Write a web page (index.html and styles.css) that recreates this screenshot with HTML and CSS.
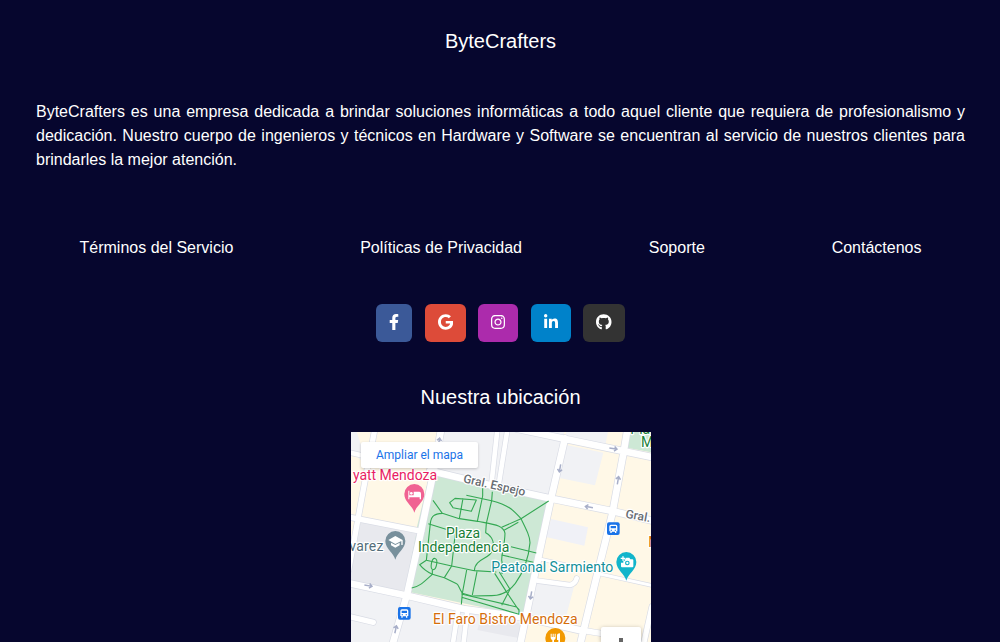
FILE: index.html
```html
<!DOCTYPE html>
<html lang="es">
<head>
<meta charset="utf-8">
<title>ByteCrafters</title>
<link rel="stylesheet" href="styles.css">
</head>
<body>
<footer class="footer">
  <h5 class="title">ByteCrafters</h5>
  <p class="about">ByteCrafters es una empresa dedicada a brindar soluciones informáticas a todo aquel cliente que requiera de profesionalismo y dedicación. Nuestro cuerpo de ingenieros y técnicos en Hardware y Software se encuentran al servicio de nuestros clientes para brindarles la mejor atención.</p>
  <nav class="links">
    <a>Términos del Servicio</a><a>Políticas de Privacidad</a><a>Soporte</a><a>Contáctenos</a>
  </nav>
  <div class="social">
    <a class="btn facebook" aria-label="Facebook"><svg viewBox="0 0 320 512"><path d="M279.14 288l14.22-92.66h-88.91v-60.13c0-25.35 12.42-50.06 52.24-50.06h40.42V6.26S260.43 0 225.36 0c-73.22 0-121.08 44.38-121.08 124.72v70.62H22.89V288h81.39v224h100.17V288z"/></svg></a>
    <a class="btn google" aria-label="Google"><svg viewBox="0 0 488 512"><path d="M488 261.8C488 403.3 391.1 504 248 504 110.8 504 0 393.2 0 256S110.8 8 248 8c66.8 0 123 24.5 166.3 64.9l-67.5 64.9C258.5 52.6 94.3 116.6 94.3 256c0 86.5 69.1 156.6 153.7 156.6 98.2 0 135-70.4 140.8-106.9H248v-85.3h236.1c2.3 12.7 3.9 24.9 3.9 41.4z"/></svg></a>
    <a class="btn instagram" aria-label="Instagram"><svg viewBox="0 0 448 512"><path d="M224.1 141c-63.6 0-114.9 51.3-114.9 114.9s51.3 114.9 114.9 114.9S339 319.5 339 255.9 287.7 141 224.1 141zm0 189.6c-41.1 0-74.7-33.5-74.7-74.7s33.5-74.7 74.7-74.7 74.7 33.5 74.7 74.7-33.6 74.7-74.7 74.7zm146.4-194.3c0 14.9-12 26.8-26.8 26.8-14.9 0-26.8-12-26.8-26.8s12-26.8 26.8-26.8 26.8 12 26.8 26.8zm76.1 27.2c-1.7-35.9-9.9-67.7-36.2-93.9-26.2-26.2-58-34.4-93.9-36.2-37-2.1-147.9-2.1-184.9 0-35.8 1.7-67.6 9.9-93.9 36.1s-34.4 58-36.2 93.9c-2.1 37-2.1 147.9 0 184.9 1.7 35.9 9.9 67.7 36.2 93.9s58 34.4 93.9 36.2c37 2.1 147.9 2.1 184.9 0 35.9-1.7 67.7-9.9 93.9-36.2 26.2-26.2 34.4-58 36.2-93.9 2.1-37 2.1-147.8 0-184.8zM398.8 388c-7.8 19.6-22.9 34.7-42.6 42.6-29.5 11.7-99.5 9-132.1 9s-102.7 2.6-132.1-9c-19.6-7.8-34.7-22.9-42.6-42.6-11.7-29.5-9-99.5-9-132.1s-2.6-102.7 9-132.1c7.8-19.6 22.9-34.7 42.6-42.6 29.5-11.7 99.5-9 132.1-9s102.7-2.6 132.1 9c19.6 7.8 34.7 22.9 42.6 42.6 11.7 29.5 9 99.5 9 132.1s2.7 102.7-9 132.1z"/></svg></a>
    <a class="btn linkedin" aria-label="LinkedIn"><svg viewBox="0 0 448 512"><path d="M100.28 448H7.4V148.9h92.88zM53.79 108.1C24.09 108.1 0 83.5 0 53.8a53.79 53.79 0 0 1 107.58 0c0 29.7-24.1 54.3-53.79 54.3zM447.9 448h-92.68V302.4c0-34.7-.7-79.2-48.29-79.2-48.29 0-55.69 37.7-55.69 76.7V448h-92.78V148.9h89.08v40.8h1.3c12.4-23.5 42.69-48.3 87.88-48.3 94 0 111.28 61.9 111.28 142.3V448z"/></svg></a>
    <a class="btn github" aria-label="GitHub"><svg viewBox="0 0 496 512"><path d="M244.8 8C106.1 8 0 113.3 0 252c0 110.9 69.8 205.8 169.5 239.2 12.8 2.3 17.3-5.6 17.3-12.1 0-6.2-.3-40.4-.3-61.4 0 0-70 15-84.7-29.8 0 0-11.4-29.1-27.8-36.6 0 0-22.9-15.7 1.6-15.4 0 0 24.9 2 38.6 25.8 21.9 38.6 58.6 27.5 72.9 20.9 2.3-16 8.8-27.1 16-33.7-55.9-6.2-112.3-14.3-112.3-110.5 0-27.5 7.6-41.3 23.6-58.9-2.6-6.5-11.1-33.3 2.6-67.9 20.9-6.5 69 27 69 27 20-5.6 41.5-8.5 62.8-8.5s42.8 2.9 62.8 8.5c0 0 48.1-33.6 69-27 13.7 34.7 5.2 61.4 2.6 67.9 16 17.7 25.8 31.5 25.8 58.9 0 96.5-58.9 104.2-114.8 110.5 9.2 7.9 17 22.9 17 46.4 0 33.7-.3 75.4-.3 83.6 0 6.5 4.6 14.4 17.3 12.1C428.2 457.8 496 362.9 496 252 496 113.3 383.5 8 244.8 8z"/></svg></a>
  </div>
  <h5 class="subtitle">Nuestra ubicación</h5>
  <div class="map">
    <svg class="map-canvas" viewBox="3 6 900 630">
      <defs>
        <g id="roads">
          <path class="w14" d="M0 68L40 77M325 535L308 645M352 540L340 645M442 0L424 165M472 0L446 165M562 452L660 465Q676 462 680 445"/>
          <path class="w9" d="M570 387L645 404M750 432L905 466"/>
          <path class="w18" d="M74 0L38 190L18 300L-4 420M-5 261L215 304M-5 559L70 577M906 530L880 645M690 600L765 612"/>
          <path class="w22" d="M273 0L251 125L212 310L172 490L127 645M645 25L603 206L557 420L510 645M832 0L820 72L787 250L735 460L690 645M500 -4L650 28L910 82M240 122L430 168L605 206L790 244L906 272M-5 459L172 497L340 537L520 562L700 603"/>
        </g>
        <path id="arrow" class="arrow" d="M-12 0H8M3 -7L11 0L3 7"/>
        <g id="bus"><rect class="bus" x="-19" y="-19" width="38" height="38" rx="6"/><path fill="#fff" d="M-7 -12H7Q12 -12 12 -7V8H9V13H5V9H-5V13H-9V8H-12V-7Q-12 -12 -7 -12z"/><path class="bus" d="M-8 -8H8V-1H-8zM-8 3h4v3h-4zM4 3h4v3h-4z"/></g>
        <path id="pin" d="M0 56C-5 35 -30 24 -30 0A30 30 0 1 1 30 0C30 24 5 35 0 56z"/>
      </defs>
      <path fill="#fff8e7" d="M0 0H910V640H0z"/>
      <path fill="#f1f2f5" d="M270 0H650L605 206L245 125zM-5 470L172 497L520 562L500 645H-5zM650 45L760 68L735 166L617 142zM650 0H645L640 20L765 50L775 0zM55 110L20 5L0 5V60zM560 452L672 470L640 590L530 560z"/>
      <path fill="#f0f1f7" d="M603 267L714 292L703 347L588 321z"/>
      <path fill="#e8e9ee" d="M32 275L208 310L168 484L0 455V400zM390 570L522 580L510 625L382 600z"/>
      <path fill="#cde8d5" d="M245 132L603 209L525 558L182 487zM238 137L200 294L214 300L250 135zM198 315L166 475L172 480L211 315zM843 0H910V68L831 53z"/>
      <use href="#roads" class="casing"/><use href="#roads" class="road"/>
      <g class="path" transform="translate(165 120)">
        <path d="M84 91L112 130C88 132 79 136 76 160L64 271L44 284C55 298 65 305 82 313C60 332 45 350 20 354M112 130L163 146L218 154C265 163 296 165 300 190C299 230 286 265 291 275V312"/>
        <path d="M184 76L260 92C310 105 325 120 348 146C365 180 375 200 375 218C371 265 360 300 331 340C308 370 285 377 260 377L200 378L172 370C160 350 160 343 155 341L118 323L82 313V300"/>
        <path d="M233 55V78L217 154M262 65L260 92L244 160L242 188C265 200 268 222 263 240C255 268 210 264 208 302M174 85L163 146M150 85L214 90L199 124L144 113L134 98zM290 172L348 146L431 93M297 181L340 157M64 271L140 288L208 302L274 306M318 230L394 249M290 255L385 277M140 288L118 323M152 180L140 288M185 300L172 370L169 403M216 305L202 375M269 310L304 365L341 420M283 306L315 358L290 406M169 372L335 411L342 419V433L170 382M70 161L130 180"/>
      </g>
      <ellipse class="path" cx="252" cy="402" rx="8" ry="17" transform="rotate(10 252 402)"/>
      <use href="#arrow" transform="translate(267 35) rotate(-80)"/>
      <use href="#arrow" transform="translate(630 115) rotate(100)"/>
      <use href="#arrow" transform="translate(790 56) rotate(8)"/>
      <use href="#arrow" transform="translate(804 151) rotate(-80)"/>
      <use href="#arrow" transform="translate(717 231) rotate(190)"/>
      <use href="#arrow" transform="translate(55 467) rotate(10)"/>
      <use href="#arrow" transform="translate(137 598) rotate(-78)"/>
      <use href="#arrow" transform="translate(543 496) rotate(100)"/>
      <g class="label">
        <text class="poi pink" x="9" y="151" textLength="252">yatt Mendoza</text>
        <text class="street" transform="translate(338 157) rotate(12.5)" textLength="190">Gral. Espejo</text>
        <text class="street" transform="translate(825 263) rotate(10)">Gral.</text>
        <text class="poi green" x="288" y="325" textLength="102">Plaza</text>
        <text class="poi green" x="204" y="367" textLength="274">Independencia</text>
        <text class="poi teal" x="424" y="427" textLength="366">Peatonal Sarmiento</text>
        <text class="poi slate" x="-2" y="364" textLength="102">varez</text>
        <text class="poi orange" x="249" y="583" textLength="434">El Faro Bistro Mendoza</text>
        <text class="poi green" x="841" y="11">Pla</text>
        <text class="poi green" x="873" y="51">M</text>
        <text class="poi orange" x="895" y="350">M</text>
      </g>
      <use href="#pin" fill="#f06292" transform="translate(193 192)"/>
      <path fill="#fff" d="M175 182h3v14h13v-11h17q5 0 5 6v17h-4v-6h-31v6h-3z"/><circle fill="#fff" cx="184" cy="190" r="4"/>
      <use href="#pin" fill="#78909c" transform="translate(136 333)"/>
      <path fill="#fff" d="M136 318L158 330V345H154V333L136 342L115 330zM123 338L136 345L149 338V346L136 353L123 346z"/>
      <use href="#pin" fill="#12b5cb" transform="translate(829 396)"/>
      <path fill="#fff" d="M822 388h4l3-5h9l3 5h6q3 0 3 3v18q0 3-3 3h-31q-3 0-3-3v-11h7v-6h6zM812 383h5v-4h4v4h5v4h-5v5h-4v-5h-5z"/><circle fill="#12b5cb" cx="832" cy="399" r="7"/><circle fill="#fff" cx="832" cy="399" r="3.5"/>
      <use href="#pin" fill="#f29900" transform="translate(616 624)"/>
      <path fill="#fff" d="M602 611h3v10h3v-10h3v10h3v-10h3v13q0 5-5 6v12h-5v-12q-5-1-5-6zM621 617q0-7 9-7v32h-5v-12h-4z"/>
      <use href="#bus" transform="translate(790 296)"/><use href="#bus" transform="translate(163 550)"/>
    </svg>
    <a class="enlarge">Ampliar el mapa</a>
    <span class="zoom-in"></span>
  </div>
</footer>
</body>
</html>
```

FILE: styles.css
```css
* { box-sizing: border-box; }
body {
  margin: 0;
  height: 642px;
  overflow: hidden;
  background: #06062e;
  color: #fff;
  font: 16px/24px "Liberation Sans", Arial, sans-serif;
}
.footer { display: flex; flex-direction: column; align-items: center; padding-top: 29px; }
.title, .subtitle { margin: 0; font-size: 20px; line-height: 24px; font-weight: 400; }
.title, .subtitle { padding-left: 1px; }
.about { width: 929px; margin: 47px 0 64px 1px; text-align: justify; }
.links { display: flex; justify-content: center; gap: 126.8px; padding-left: 1px; }
.social { display: flex; gap: 12.45px; margin: 44px 0 43px; padding-left: 1px; }
.btn { display: flex; height: 38px; padding: 10px 13px 12px; border-radius: 6px; }
.btn svg { display: block; height: 16px; fill: #fff; }
.facebook { background: #3b5998; }
.facebook svg { width: 10px; }
.google { background: #dd4b39; }
.google svg { width: 15.25px; }
.instagram { background: #ac2bac; }
.instagram svg, .linkedin svg { width: 14px; }
.linkedin { background: #0082ca; }
.github { background: #333; }
.github svg { width: 15.5px; }
.map { position: relative; width: 300px; height: 210px; margin: 23px 0 0 2px; overflow: hidden; }
.map-canvas { display: block; width: 300px; height: 210px; }
.enlarge {
  position: absolute;
  left: 10px;
  top: 10px;
  width: 117px;
  height: 26px;
  border-radius: 2px;
  background: #fff;
  box-shadow: 0 1px 3px rgba(0, 0, 0, .2);
  color: #1a73e8;
  font: 12px/26px Roboto, sans-serif;
  text-align: center;
}
.zoom-in {
  position: absolute;
  right: 10px;
  bottom: 0;
  display: flex;
  justify-content: center;
  align-items: flex-end;
  width: 40px;
  height: 15px;
  border-radius: 2px 2px 0 0;
  background: #fff;
  box-shadow: 0 1px 4px rgba(0, 0, 0, .3);
}
.zoom-in::before { content: ""; width: 4px; height: 4px; background: #666; }
.casing, .road { fill: none; stroke-linejoin: round; stroke-linecap: round; }
.casing { stroke: #d9dce5; --edge: 4px; }
.road { stroke: #fff; --edge: 0px; }
.w9 { stroke-width: calc(9px + var(--edge)); }
.w14 { stroke-width: calc(14px + var(--edge)); }
.w18 { stroke-width: calc(16px + var(--edge)); }
.w22 { stroke-width: calc(20px + var(--edge)); }
.arrow { fill: none; stroke: #a7aec8; stroke-width: 4.5px; }
.path { fill: none; stroke: #34a853; stroke-width: 3.3px; stroke-linejoin: round; }
.bus { fill: #1a73e8; }
.label text {
  font-family: Roboto, sans-serif;
  stroke: #fff;
  stroke-width: 7px;
  stroke-linejoin: round;
  paint-order: stroke;
}
.label .poi { font-size: 42px; }
.label .street { font-size: 36px; fill: #686c72; font-weight: 500; }
.label .pink { fill: #e91e63; }
.label .green { fill: #188038; }
.label .teal { fill: #129099; }
.label .slate { fill: #546e7a; }
.label .orange { fill: #d56e0c; }
```
